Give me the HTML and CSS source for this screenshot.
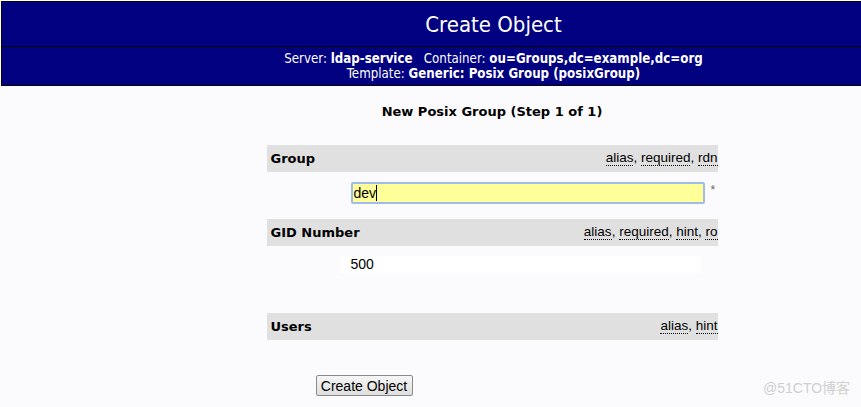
FILE: index.html
```html
<!DOCTYPE html>
<html>
<head>
<meta charset="utf-8">
<link rel="stylesheet" href="styles.css">
</head>
<body>
<div class="page">
  <div class="header">
    <div class="title">Create Object</div>
    <div class="subtitle">
      <div>Server: <b>ldap-service</b>&nbsp;&nbsp;&nbsp;Container: <b>ou=Groups,dc=example,dc=org</b></div>
      <div>Template: <b>Generic: Posix Group (posixGroup)</b></div>
    </div>
  </div>
  <div class="content">
    <div class="step">New Posix Group (Step 1 of 1)</div>
    <div class="form">
      <div class="attr-head">
        <span class="attr-name">Group</span>
        <span class="attr-flags"><span class="flag">alias</span>, <span class="flag">required</span>, <span class="flag">rdn</span></span>
      </div>
      <div class="attr-value first">
        <div class="input focused">dev<span class="caret"></span></div>
        <span class="star">*</span>
      </div>
      <div class="attr-head">
        <span class="attr-name">GID Number</span>
        <span class="attr-flags"><span class="flag">alias</span>, <span class="flag">required</span>, <span class="flag">hint</span>, <span class="flag">ro</span></span>
      </div>
      <div class="attr-value readonly">
        <div class="ro-box">500</div>
      </div>
      <div class="attr-head">
        <span class="attr-name">Users</span>
        <span class="attr-flags"><span class="flag">alias</span>, <span class="flag">hint</span></span>
      </div>
      <div class="actions">
        <button class="btn">Create Object</button>
      </div>
    </div>
  </div>
</div>
<div class="watermark">@51CTO博客</div>
</body>
</html>
```

FILE: styles.css
```css
html, body {
  margin: 0;
  padding: 0;
  overflow: hidden;
  background: #fbfbfd;
  height: 407px;
}
body {
  position: relative;
  font-family: "DejaVu Sans", sans-serif;
  color: #000;
}
.page {
  padding: 1px 0 0 1px;
}
.header {
  background: #000080;
  color: #fff;
  border-top: 1px solid #000;
  border-left: 1px solid #000;
  border-bottom: 1px solid #000;
  text-align: center;
  padding-left: 124px;
  font-family: "DejaVu Sans Condensed", "DejaVu Sans", sans-serif;
}
.title {
  height: 44px;
  line-height: 46px;
  font-size: 22px;
  border-bottom: 1px solid #000;
  margin-left: -124px;
  padding-left: 124px;
}
.subtitle {
  height: 38px;
  font-size: 13.2px;
  line-height: 15px;
  padding-top: 4px;
  box-sizing: border-box;
}
.content {
  padding-left: 122px;
}
.step {
  text-align: center;
  font-weight: bold;
  font-size: 13px;
  margin-top: 18px;
  line-height: 16px;
}
.form {
  width: 451px;
  margin: 25px auto 0;
}
.attr-head {
  background: #e0e0e0;
  height: 27px;
  display: flex;
  justify-content: space-between;
  align-items: center;
  padding-left: 4px;
  overflow: hidden;
  white-space: nowrap;
}
.attr-name {
  font-weight: bold;
  font-size: 13px;
}
.attr-flags {
  font-family: "Liberation Sans", Arial, sans-serif;
  font-size: 13.5px;
  color: #000;
  padding-bottom: 3px;
}
.flag {
  border-bottom: 1px dotted #000;
}
.attr-value {
  display: flex;
  align-items: flex-start;
}
.attr-value.first {
  padding: 10px 0 15px 84px;
}
.input {
  width: 354px;
  height: 22px;
  box-sizing: border-box;
  background: #ffff99;
  border: 2px solid #9dbbec;
  border-radius: 2px;
  font-family: "Liberation Sans", Arial, sans-serif;
  font-size: 14px;
  line-height: 18px;
  padding-left: 1px;
  display: flex;
  align-items: center;
}
.caret {
  display: inline-block;
  width: 1px;
  height: 16px;
  background: #000;
}
.star {
  color: #666;
  font-family: "Liberation Sans", Arial, sans-serif;
  font-size: 12px;
  margin-left: 6px;
  margin-top: 1px;
}
.attr-value.readonly {
  padding: 10px 0 40px 73px;
}
.ro-box {
  width: 361px;
  height: 17px;
  background: #fff;
  padding-left: 11px;
  box-sizing: border-box;
  font-family: "Liberation Sans", Arial, sans-serif;
  font-size: 14px;
  line-height: 17px;
}
.actions {
  padding: 35px 0 0 49px;
}
.btn {
  font-family: "Liberation Sans", Arial, sans-serif;
  font-size: 14px;
  height: 21px;
  width: 97px;
  padding: 0;
  background: linear-gradient(#f6f6f6, #dedede);
  border: 1px solid #8a8a8a;
  border-radius: 2px;
  color: #000;
}
.watermark {
  position: absolute;
  left: 763px;
  top: 377px;
  font-family: "Liberation Sans", "Noto Sans CJK SC", sans-serif;
  font-size: 14px;
  color: #cfcfcf;
}
```
